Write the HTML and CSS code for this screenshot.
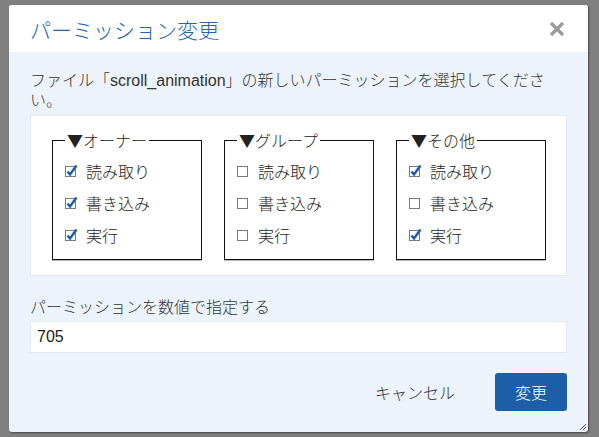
FILE: index.html
```html
<!DOCTYPE html>
<html lang="ja">
<head>
<meta charset="utf-8">
<title>パーミッション変更</title>
<link rel="stylesheet" href="styles.css">
</head>
<body>
<div class="dialog">
  <div class="header">
    <h1 class="title">パーミッション変更</h1>
    <button class="close" aria-label="閉じる">
      <svg width="16" height="16" viewBox="0 0 16 16"><path d="M2 2 L14 14 M14 2 L2 14" stroke="#9a9a9a" stroke-width="3.2" fill="none"/></svg>
    </button>
  </div>
  <div class="body">
    <p class="desc">ファイル「scroll_animation」の新しいパーミッションを選択してください。</p>
    <div class="panel">
      <fieldset class="group">
        <legend>▼オーナー</legend>
        <label class="row"><svg class="cb" width="14" height="14" viewBox="0 0 14 14"><rect x="0.5" y="2.5" width="10" height="10" fill="#fff" stroke="#7a7a7a"/><path d="M2.5 7.5 L5 10.5 L11.5 1.5" stroke="#1f5fae" stroke-width="2.6" fill="none"/></svg>読み取り</label>
        <label class="row"><svg class="cb" width="14" height="14" viewBox="0 0 14 14"><rect x="0.5" y="2.5" width="10" height="10" fill="#fff" stroke="#7a7a7a"/><path d="M2.5 7.5 L5 10.5 L11.5 1.5" stroke="#1f5fae" stroke-width="2.6" fill="none"/></svg>書き込み</label>
        <label class="row"><svg class="cb" width="14" height="14" viewBox="0 0 14 14"><rect x="0.5" y="2.5" width="10" height="10" fill="#fff" stroke="#7a7a7a"/><path d="M2.5 7.5 L5 10.5 L11.5 1.5" stroke="#1f5fae" stroke-width="2.6" fill="none"/></svg>実行</label>
      </fieldset>
      <fieldset class="group">
        <legend>▼グループ</legend>
        <label class="row"><svg class="cb" width="14" height="14" viewBox="0 0 14 14"><rect x="0.5" y="2.5" width="10" height="10" fill="#fff" stroke="#7a7a7a"/></svg>読み取り</label>
        <label class="row"><svg class="cb" width="14" height="14" viewBox="0 0 14 14"><rect x="0.5" y="2.5" width="10" height="10" fill="#fff" stroke="#7a7a7a"/></svg>書き込み</label>
        <label class="row"><svg class="cb" width="14" height="14" viewBox="0 0 14 14"><rect x="0.5" y="2.5" width="10" height="10" fill="#fff" stroke="#7a7a7a"/></svg>実行</label>
      </fieldset>
      <fieldset class="group">
        <legend>▼その他</legend>
        <label class="row"><svg class="cb" width="14" height="14" viewBox="0 0 14 14"><rect x="0.5" y="2.5" width="10" height="10" fill="#fff" stroke="#7a7a7a"/><path d="M2.5 7.5 L5 10.5 L11.5 1.5" stroke="#1f5fae" stroke-width="2.6" fill="none"/></svg>読み取り</label>
        <label class="row"><svg class="cb" width="14" height="14" viewBox="0 0 14 14"><rect x="0.5" y="2.5" width="10" height="10" fill="#fff" stroke="#7a7a7a"/></svg>書き込み</label>
        <label class="row"><svg class="cb" width="14" height="14" viewBox="0 0 14 14"><rect x="0.5" y="2.5" width="10" height="10" fill="#fff" stroke="#7a7a7a"/><path d="M2.5 7.5 L5 10.5 L11.5 1.5" stroke="#1f5fae" stroke-width="2.6" fill="none"/></svg>実行</label>
      </fieldset>
    </div>
    <label class="num-label" for="num">パーミッションを数値で指定する</label>
    <input class="num" id="num" type="text" value="705">
    <div class="footer">
      <button class="btn-cancel">キャンセル</button>
      <button class="btn-ok">変更</button>
    </div>
  </div>
  <svg class="grip" width="8" height="8" viewBox="0 0 8 8"><path d="M1 7 L7 1 M4 7 L7 4" stroke="#555" stroke-width="1" fill="none"/></svg>
</div>
</body>
</html>
```
FILE: styles.css
```css
html, body {
  margin: 0;
  padding: 0;
}
body {
  background: #808080;
  padding: 5px 0 0 9px;
  height: 437px;
  box-sizing: border-box;
  font-family: "Noto Sans CJK JP", "Liberation Sans", sans-serif;
  font-weight: 300;
  color: #333;
}
.dialog {
  position: relative;
  width: 579px;
  height: 427px;
  background: #ecf3fb;
  border-radius: 3px;
  box-shadow: 1px 1px 2px rgba(0, 0, 0, 0.45);
  overflow: hidden;
  display: flex;
  flex-direction: column;
}
.header {
  height: 47px;
  flex: none;
  background: #fff;
  display: flex;
  align-items: center;
  justify-content: space-between;
  padding: 0 23px 0 21px;
}
.title {
  margin: 0;
  font-size: 21px;
  font-weight: 300;
  line-height: 26px;
  color: #2365b0;
}
.close {
  border: none;
  background: none;
  padding: 0;
  width: 16px;
  height: 16px;
  display: flex;
}
.body {
  flex: 1;
  padding: 19px 21px 21px;
  display: flex;
  flex-direction: column;
}
.desc {
  margin: 0 0 4px;
  font-size: 16px;
  line-height: 20px;
  font-family: "Liberation Sans", "Noto Sans CJK JP", sans-serif;
}
.panel {
  background: #fff;
  border: 1px solid #e4eaf2;
  padding: 14px 0 15px 21px;
  display: flex;
  gap: 22px;
}
.group {
  margin: 0;
  width: 150px;
  box-sizing: border-box;
  border: 1px solid #111;
  box-shadow: 0 1px 0 #b8b8b8;
  padding: 5px 12px 8px;
  min-width: 0;
}
.group legend {
  padding: 0 2px;
  font-size: 16px;
  line-height: 20px;
  color: #222;
}
.row {
  display: flex;
  align-items: center;
  height: 32px;
  font-size: 16px;
  line-height: 32px;
  color: #222;
}
.cb {
  flex: none;
  margin-right: 7px;
}
.num-label {
  margin-top: 20px;
  font-size: 16px;
  line-height: 20px;
}
.num {
  margin-top: 5px;
  height: 32px;
  box-sizing: border-box;
  border: 1px solid #e2e8f0;
  background: #fff;
  padding: 0 6px;
  font-family: "Liberation Sans", sans-serif;
  font-size: 16px;
  color: #222;
  outline: none;
}
.footer {
  margin-top: 20px;
  display: flex;
  justify-content: flex-end;
  align-items: center;
}
.btn-cancel {
  border: none;
  background: none;
  height: 38px;
  padding: 0 20px;
  font-family: "Noto Sans CJK JP", sans-serif;
  font-weight: 300;
  font-size: 16px;
  color: #333;
  margin-right: 20px;
}
.btn-ok {
  border: none;
  border-radius: 3px;
  background: #1c5ea7;
  color: #fff;
  height: 38px;
  padding: 0 20px;
  font-family: "Noto Sans CJK JP", sans-serif;
  font-weight: 300;
  font-size: 16px;
}
.grip {
  position: absolute;
  right: 1px;
  bottom: 1px;
}
```
